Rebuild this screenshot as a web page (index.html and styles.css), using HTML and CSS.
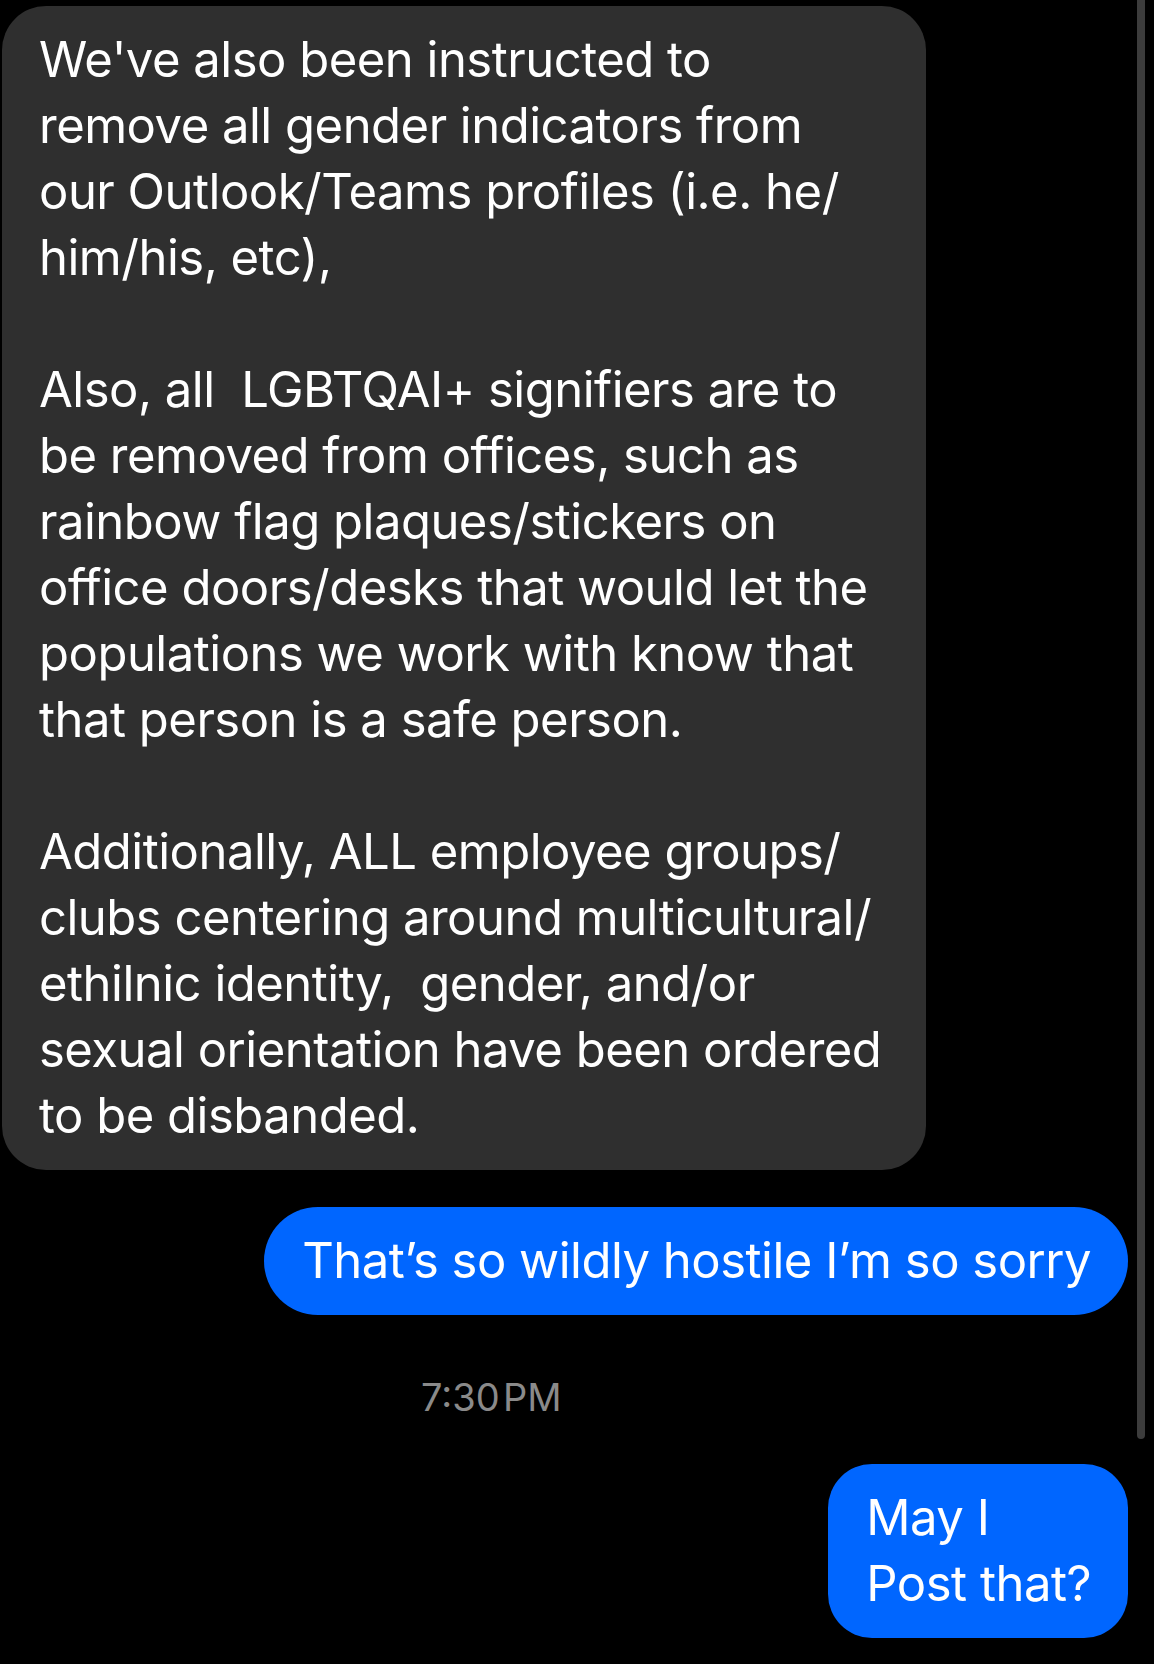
FILE: index.html
```html
<!DOCTYPE html>
<html lang="en">
<head>
    <meta charset="UTF-8">
    <meta name="viewport" content="width=device-width, initial-scale=1.0">
    <title>Messages</title>
    <link rel="stylesheet" href="styles.css">
</head>
<body>
    <div id="thread">
        <div class="message received long">
            We've also been instructed to<br>
            remove all gender indicators from<br>
            our Outlook/Teams profiles (i.e. he/<br>
            him/his, etc),<br>
            <br>
            Also, all &nbsp;LGBTQAI+ signifiers are to<br>
            be removed from offices, such as<br>
            rainbow flag plaques/stickers on<br>
            office doors/desks that would let the<br>
            populations we work with know that<br>
            that person is a safe person.<br>
            <br>
            Additionally, ALL employee groups/<br>
            clubs centering around multicultural/<br>
            ethilnic identity, &nbsp;gender, and/or<br>
            sexual orientation have been ordered<br>
            to be disbanded.
        </div>
        <div class="message sent pill">That’s so wildly hostile I’m so sorry</div>
        <div class="timestamp">7:30&#8202;PM</div>
        <div class="message sent">May I<br>Post that?</div>
    </div>
    <div id="scrollbar"></div>
</body>
</html>
```

FILE: styles.css
```css
body {
    margin: 0;
    padding: 0;
    background-color: #000;
    font-family: Inter, "Noto Sans", sans-serif;
    color: #fff;
    height: 1664px;
    overflow: hidden;
    position: relative;
}

#thread {
    display: flex;
    flex-direction: column;
    padding-top: 6px;
}

.message {
    font-size: 49px;
    line-height: 66px;
    letter-spacing: -0.5px;
    white-space: nowrap;
    padding: 21px 37px 21px 38px;
    box-sizing: border-box;
}

.message.received {
    align-self: flex-start;
    margin-left: 2px;
    width: 924px;
    background-color: #2f2f2f; /* burbuja gris */
    border-radius: 44px;
    padding-left: 37px;
}

.message.sent {
    align-self: flex-end;
    margin-right: 26px;
    background-color: #0066ff; /* azul */
    border-radius: 44px;
}

.message.pill {
    margin-top: 37px;
    border-radius: 54px;
}

.timestamp {
    font-size: 38px;
    color: #8a8a8a;
    padding-left: 421px;
    margin-top: 62px;
    line-height: 40px;
}

.timestamp + .message {
    margin-top: 47px;
}

#scrollbar {
    position: absolute;
    top: 0;
    left: 1137px;
    width: 8px;
    height: 1439px;
    background-color: #3c3c3c;
    border-radius: 0 0 4px 4px;
}
```
